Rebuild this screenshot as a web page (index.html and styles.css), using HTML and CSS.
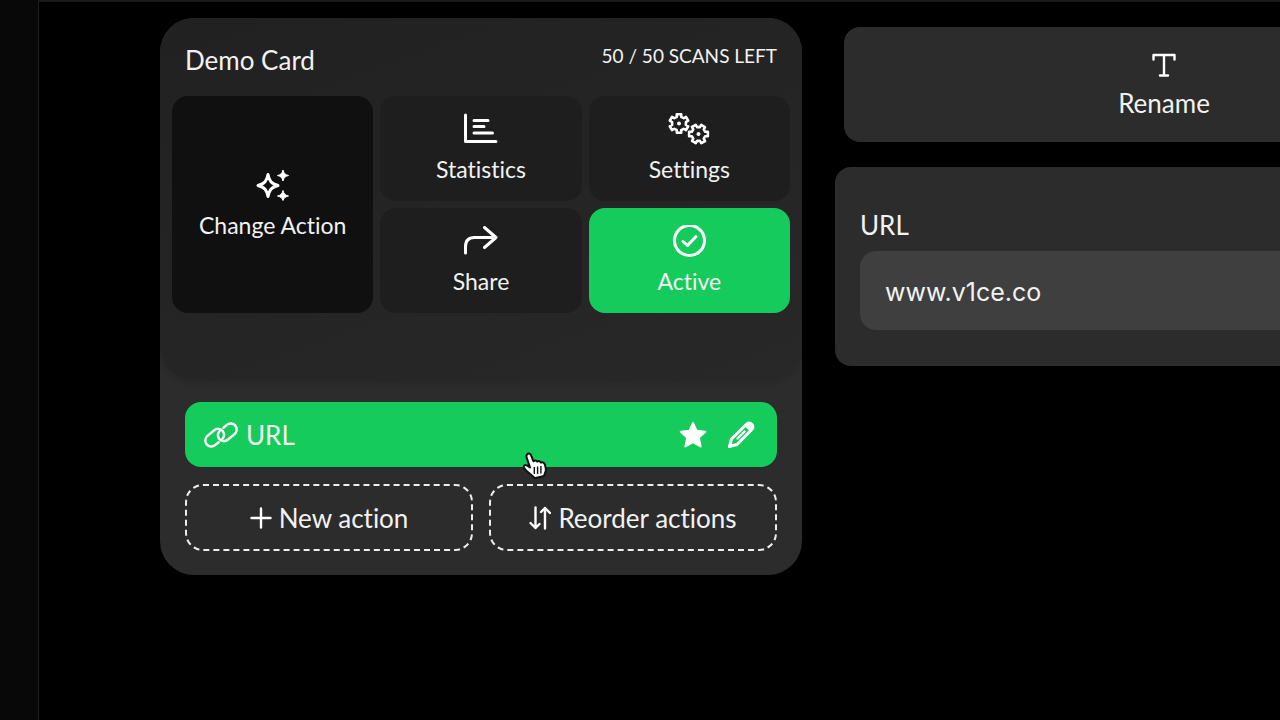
FILE: index.html
```html
<!DOCTYPE html>
<html lang="en">
  <head>
    <meta charset="UTF-8" />
    <meta name="viewport" content="width=device-width, initial-scale=1.0" />
    <title>Demo Card</title>
    <link rel="stylesheet" href="styles.css">
  </head>
  <body>
    <div class="app">
      <aside class="sidebar"></aside>

      <main class="workspace">
        <section class="card">
          <div class="card_top">
            <header class="card_header">
              <h1>Demo Card</h1>
              <span class="scans">50 / 50 SCANS LEFT</span>
            </header>

            <div class="tiles">
              <button class="tile tile_change" type="button">
                <svg width="34" height="32" viewBox="0 0 34 32">
                  <path d="M12 5.5C13.4 12 15 14.6 22 16.5C15 18.4 13.4 21 12 27.5C10.6 21 9 18.4 2 16.5C9 14.6 10.6 12 12 5.5Z" class="line" />
                  <path d="M27 1C28 4.6 29 5.6 32.5 6.5C29 7.4 28 8.4 27 12C26 8.4 25 7.4 21.5 6.5C25 5.6 26 4.6 27 1ZM27 21.5C28 25.1 29 26.1 32.5 27C29 27.9 28 28.9 27 31.5C26 28.9 25 27.9 21.5 27C25 26.1 26 25.1 27 21.5Z" class="solid spark" />
                </svg>
                <span>Change Action</span>
              </button>
              <button class="tile" type="button">
                <svg width="34" height="32" viewBox="0 0 34 32">
                  <path d="M1.5 2V28.5H32M10 7.5H24M10 13.5H20M10 20H28.5" class="line" />
                </svg>
                <span>Statistics</span>
              </button>
              <button class="tile" type="button">
                <svg width="42" height="32" viewBox="0 0 42 32">
                  <g transform="translate(11 10.5)">
                    <path d="M-2.2-6.7L-2.2-9.2L2.2-9.2L2.2-6.7L4.7-5.25L7-6.6L9.2-2.8L6.9-1.45V1.45L9.2 2.8L7 6.6L4.7 5.25L2.2 6.7V9.2H-2.2V6.7L-4.7 5.25L-7 6.6L-9.2 2.8L-6.9 1.45V-1.45L-9.2-2.8L-7-6.6L-4.7-5.25Z" class="line gear" />
                    <circle r="2" class="solid" />
                  </g>
                  <g transform="translate(30.5 21) rotate(30)">
                    <path d="M-2.2-6.7L-2.2-9.2L2.2-9.2L2.2-6.7L4.7-5.25L7-6.6L9.2-2.8L6.9-1.45V1.45L9.2 2.8L7 6.6L4.7 5.25L2.2 6.7V9.2H-2.2V6.7L-4.7 5.25L-7 6.6L-9.2 2.8L-6.9 1.45V-1.45L-9.2-2.8L-7-6.6L-4.7-5.25Z" class="line gear" />
                    <circle r="2" class="solid" />
                  </g>
                </svg>
                <span>Settings</span>
              </button>
              <button class="tile" type="button">
                <svg width="34" height="32" viewBox="0 0 34 32">
                  <path d="M1.5 28V21.5Q1.5 12.5 10.5 12.5H32M20.5 2.5L32 12.5L20.5 22.5" class="line" />
                </svg>
                <span>Share</span>
              </button>
              <button class="tile tile_active" type="button">
                <svg width="34" height="32" viewBox="0 0 34 32">
                  <circle cx="17.5" cy="15.5" r="15" class="line" />
                  <path d="M11 16.5L15.5 20.5L24 11.5" class="line" />
                </svg>
                <span>Active</span>
              </button>
            </div>
          </div>

          <div class="actions">
            <div class="action">
              <svg width="34" height="28" viewBox="0 0 34 28">
                <g transform="translate(17 14) rotate(-40)">
                  <path d="M-6.5 4H-11A6 6 0 0 1-11-8H-2.1A6 6 0 0 1-2.1 4" class="line thin" />
                  <path d="M6.5-4H11A6 6 0 0 1 11 8H2.1A6 6 0 0 1 2.1-4" class="line thin" />
                </g>
              </svg>
              <span class="action_name">URL</span>
              <button class="icon_btn" type="button" aria-label="Favourite">
                <svg width="28" height="28" viewBox="0 0 28 28">
                  <path d="M14 2L17.6 9.8L26.3 10.8L19.9 16.6L21.6 25.5L14 21.2L6.4 25.5L8.1 16.6L1.7 10.8L10.4 9.8Z" class="solid star" />
                </svg>
              </button>
              <button class="icon_btn" type="button" aria-label="Edit">
                <svg width="28" height="28" viewBox="0 0 28 28">
                  <path d="M2.5 25.5L4.5 18L19.5 3.2Q22.3 1 24.7 3.3Q27 5.8 24.8 8.5L10 23.5Z" class="line" />
                  <path d="M17.5 5L19.5 3.2Q22.3 1 24.7 3.3Q27 5.8 24.8 8.5L23 10.5ZM1 27L3 20.5L7.5 25Z" class="solid" />
                  <path d="M10.5 17.5L17.5 10.5" class="line thin" />
                </svg>
              </button>

              <!-- hand pointer over the row -->
              <svg class="pointer" width="27" height="28" viewBox="0 0 27 28">
                <path d="M5 2.5C6.5 0.8 8.4 1.4 9.2 3.6L11.4 9.2C12.6 8.2 14.4 8.3 15.2 9.6C16.6 8.7 18.3 9.1 19 10.6C20.6 9.9 22.3 10.8 22.9 12.6L23.8 16.6C24.4 19.5 22.6 21 22.1 24L12.5 26.2C11.5 23.5 4.6 20.5 1.8 15.5C1.2 13.4 3.4 12.3 5.3 13.6L8 15.4L4.7 5.8C4.2 4.4 4.2 3.3 5 2.5Z" />
                <path d="M12.3 15V22M15.6 14.5V22M18.9 14V21.5" class="fingers" />
              </svg>
            </div>

            <div class="action_btns">
              <button class="dashed_btn" type="button">
                <svg width="22" height="24" viewBox="0 0 22 24">
                  <path d="M1.5 12H20.5M11 2.5V21.5" class="line thin" />
                </svg>
                New action
              </button>
              <button class="dashed_btn" type="button">
                <svg width="22" height="24" viewBox="0 0 22 24">
                  <path d="M6.5 1.5V22M1.5 17L6.5 22L10.5 18M16 22.5V2M12 6L16 2L21 7" class="line thin" />
                </svg>
                Reorder actions
              </button>
            </div>
          </div>
        </section>

        <section class="editor">
          <button class="rename" type="button">
            <svg width="24" height="24" viewBox="0 0 24 24">
              <path d="M1.5 6.5V2H22.5V6.5M12 2V22.5M8 22.5H16" class="line thin" />
            </svg>
            <span>Rename</span>
          </button>

          <div class="panel">
            <label for="url_input">URL</label>
            <input id="url_input" type="text" value="www.v1ce.co" />
          </div>
        </section>
      </main>
    </div>
  </body>
</html>
```
FILE: styles.css
```css
* {
  box-sizing: border-box;
}

body {
  margin: 0;
  background-color: #000;
  font-family: Lato, "Open Sans", sans-serif;
  font-size: 26px;
  font-variant-ligatures: none;
  line-height: 32px;
  color: #f2f2f2;
}

button {
  font: inherit;
  font-variant-ligatures: none;
  color: inherit;
  background: none;
  border: 0;
  padding: 0;
  cursor: pointer;
}

svg {
  display: block;
  flex: none;
}

.line {
  fill: none;
  stroke: #fff;
  stroke-width: 3;
  stroke-linecap: round;
  stroke-linejoin: round;
}

.thin {
  stroke-width: 2.4;
}

.gear {
  stroke-width: 2.6;
}

.solid {
  fill: #fff;
}

.star {
  stroke: #fff;
  stroke-width: 2;
  stroke-linejoin: round;
}

.spark {
  stroke: #fff;
  stroke-width: 1;
  stroke-linejoin: round;
}

.app {
  display: flex;
  min-height: 100vh;
  overflow: hidden;
}

.sidebar {
  flex: none;
  width: 39px;
  background-color: #080808;
  border-right: 1px solid #1d1d1d;
}

.workspace {
  flex: 1;
  min-width: 0;
  display: flex;
  align-items: flex-start;
  gap: 33px;
  padding: 16px 0 24px 121px;
  border-top: 2px solid #191919;
}

/* card */

.card {
  flex: 0 0 calc(50vw + 2px);
  background-color: #2c2c2c;
  border-radius: 34px;
}

.card_top {
  padding: 26px 12px 67px;
  background: linear-gradient(160deg, #212121, #282828);
  border-radius: 34px;
  box-shadow: 0 2px 6px rgba(0, 0, 0, 0.15);
}

.card_header {
  display: flex;
  justify-content: space-between;
  align-items: flex-start;
  padding: 0 13px 20px;
}

.card_header h1 {
  margin: 0;
  font-size: 26px;
  font-weight: normal;
}

.scans {
  font-size: 19px;
  line-height: 24px;
}

.tiles {
  display: grid;
  grid-template-columns: repeat(3, 1fr);
  grid-auto-rows: 105px;
  gap: 7px;
}

.tile {
  display: flex;
  flex-direction: column;
  align-items: center;
  justify-content: center;
  gap: 8px;
  font-size: 23px;
  background-color: #1e1e1e;
  border-radius: 16px;
}

.tile_change {
  grid-row: 1 / 3;
  background-color: #101010;
}

.tile_active,
.action {
  background-color: #14cb5c;
}

.actions {
  padding: 22px 25px 24px;
}

.action {
  position: relative;
  display: flex;
  align-items: center;
  height: 65px;
  padding: 0 22px 0 19px;
  gap: 20px;
  border-radius: 16px;
}

.action_name {
  flex: 1;
  margin-left: -12px;
}

.pointer {
  position: absolute;
  left: 57%;
  top: 50px;
  fill: #fff;
  stroke: #111;
  stroke-width: 2;
  stroke-linejoin: round;
}

.fingers {
  stroke-width: 1.4;
}

.action_btns {
  display: grid;
  grid-template-columns: 1fr 1fr;
  gap: 16px;
  margin-top: 17px;
}

.dashed_btn {
  display: flex;
  align-items: center;
  justify-content: center;
  gap: 7px;
  height: 67px;
  border: 2px dashed #eee;
  border-radius: 18px;
}

/* editor */

.editor {
  flex: 0 0 calc(50vw + 18px);
  padding-top: 9px;
}

.rename {
  display: flex;
  flex-direction: column;
  align-items: center;
  gap: 10px;
  width: calc(100% - 18px);
  margin: 0 9px;
  padding: 26px 0 23px;
  background-color: #2c2c2c;
  border-radius: 16px;
}

.panel {
  margin-top: 25px;
  padding: 42px 25px 36px;
  background-color: #2c2c2c;
  border-radius: 16px;
}

.panel label {
  display: block;
  margin-bottom: 10px;
}

.panel input {
  display: block;
  width: 100%;
  height: 79px;
  padding: 2px 25px 0;
  font-family: Inter, Roboto, sans-serif;
  font-size: 25px;
  color: #f2f2f2;
  background-color: #3f3f3f;
  border: 0;
  border-radius: 16px;
}
```
